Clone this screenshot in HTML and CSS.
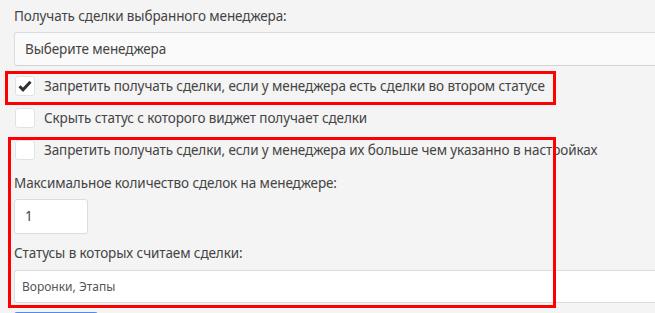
FILE: index.html
```html
<!DOCTYPE html>
<html lang="ru">
<head>
    <meta charset="UTF-8">
    <title>Настройки виджета</title>
    <link rel="stylesheet" href="styles.css">
</head>
<body>
    <div class="settings">
        <label class="field-label">Получать сделки выбранного менеджера:</label>
        <div class="select">Выберите менеджера</div>

        <div class="checks">
            <div class="check-row">
                <span class="check">
                    <svg width="14" height="12" viewBox="0 0 14 12"><path d="M1.5 6.2 L5 9.8 L12.5 1.8" fill="none" stroke="#2f3133" stroke-width="3"/></svg>
                </span>
                <span>Запретить получать сделки, если у менеджера есть сделки во втором статусе</span>
            </div>
            <div class="check-row">
                <span class="check"></span>
                <span>Скрыть статус с которого виджет получает сделки</span>
            </div>
            <div class="check-row">
                <span class="check"></span>
                <span>Запретить получать сделки, если у менеджера их больше чем указанно в настройках</span>
            </div>
        </div>

        <label class="field-label">Максимальное количество сделок на менеджере:</label>
        <div class="input small">1</div>

        <label class="field-label">Статусы в которых считаем сделки:</label>
        <div class="input wide">Воронки, Этапы</div>

        <div class="save-btn"></div>
    </div>

    <!-- Выделения -->
    <div class="mark mark-one"></div>
    <div class="mark mark-two"></div>
</body>
</html>
```

FILE: styles.css
```css
body {
    font-family: "Noto Sans", sans-serif;
    font-size: 13.5px;
    letter-spacing: -0.1px;
    background-color: #f4f4f4;
    color: #444;
    margin: 0;
}

.settings {
    height: 313px;
    overflow: hidden;
    box-sizing: border-box;
    padding: 6px 0 0 14px;
}

.field-label {
    display: block;
    line-height: 20px;
}

.select {
    margin-top: 6px;
    height: 32px;
    background-color: #fafafa;
    border: 1px solid #dcdcdc;
    border-right: none;
    border-bottom-color: #d2d2d2;
    border-radius: 3px 0 0 3px;
    padding-left: 10px;
    line-height: 32px;
}

.checks {
    margin: 4px 0 7px;
}

.check-row {
    display: flex;
    align-items: center;
    gap: 9px;
    height: 32px;
    padding-left: 1px;
}

.check {
    width: 18px;
    height: 18px;
    background-color: #fff;
    border: 1px solid #e2e2e2;
    border-radius: 3px;
    display: flex;
    align-items: center;
    justify-content: center;
}

.input {
    background-color: #fff;
    border: 1px solid #dcdcdc;
    border-radius: 3px;
}

.input.small {
    margin: 6px 0 9px;
    width: 62px;
    height: 33px;
    padding-left: 10px;
    line-height: 33px;
}

.input.wide {
    margin-top: 7px;
    height: 31px;
    padding-left: 7px;
    font-size: 12px;
    letter-spacing: 0;
    line-height: 31px;
    border-right: none;
    border-radius: 3px 0 0 3px;
    color: #555;
}

.save-btn {
    margin-top: 9px;
    width: 84px;
    height: 20px;
    background-color: #4c8bf5;
    border-radius: 3px;
}

.mark {
    position: absolute;
    border: 3px solid #ff0000;
}

.mark-one {
    left: 5px;
    top: 71px;
    width: 545px;
    height: 28px;
}

.mark-two {
    left: 8px;
    top: 137px;
    width: 542px;
    height: 165px;
}
```
